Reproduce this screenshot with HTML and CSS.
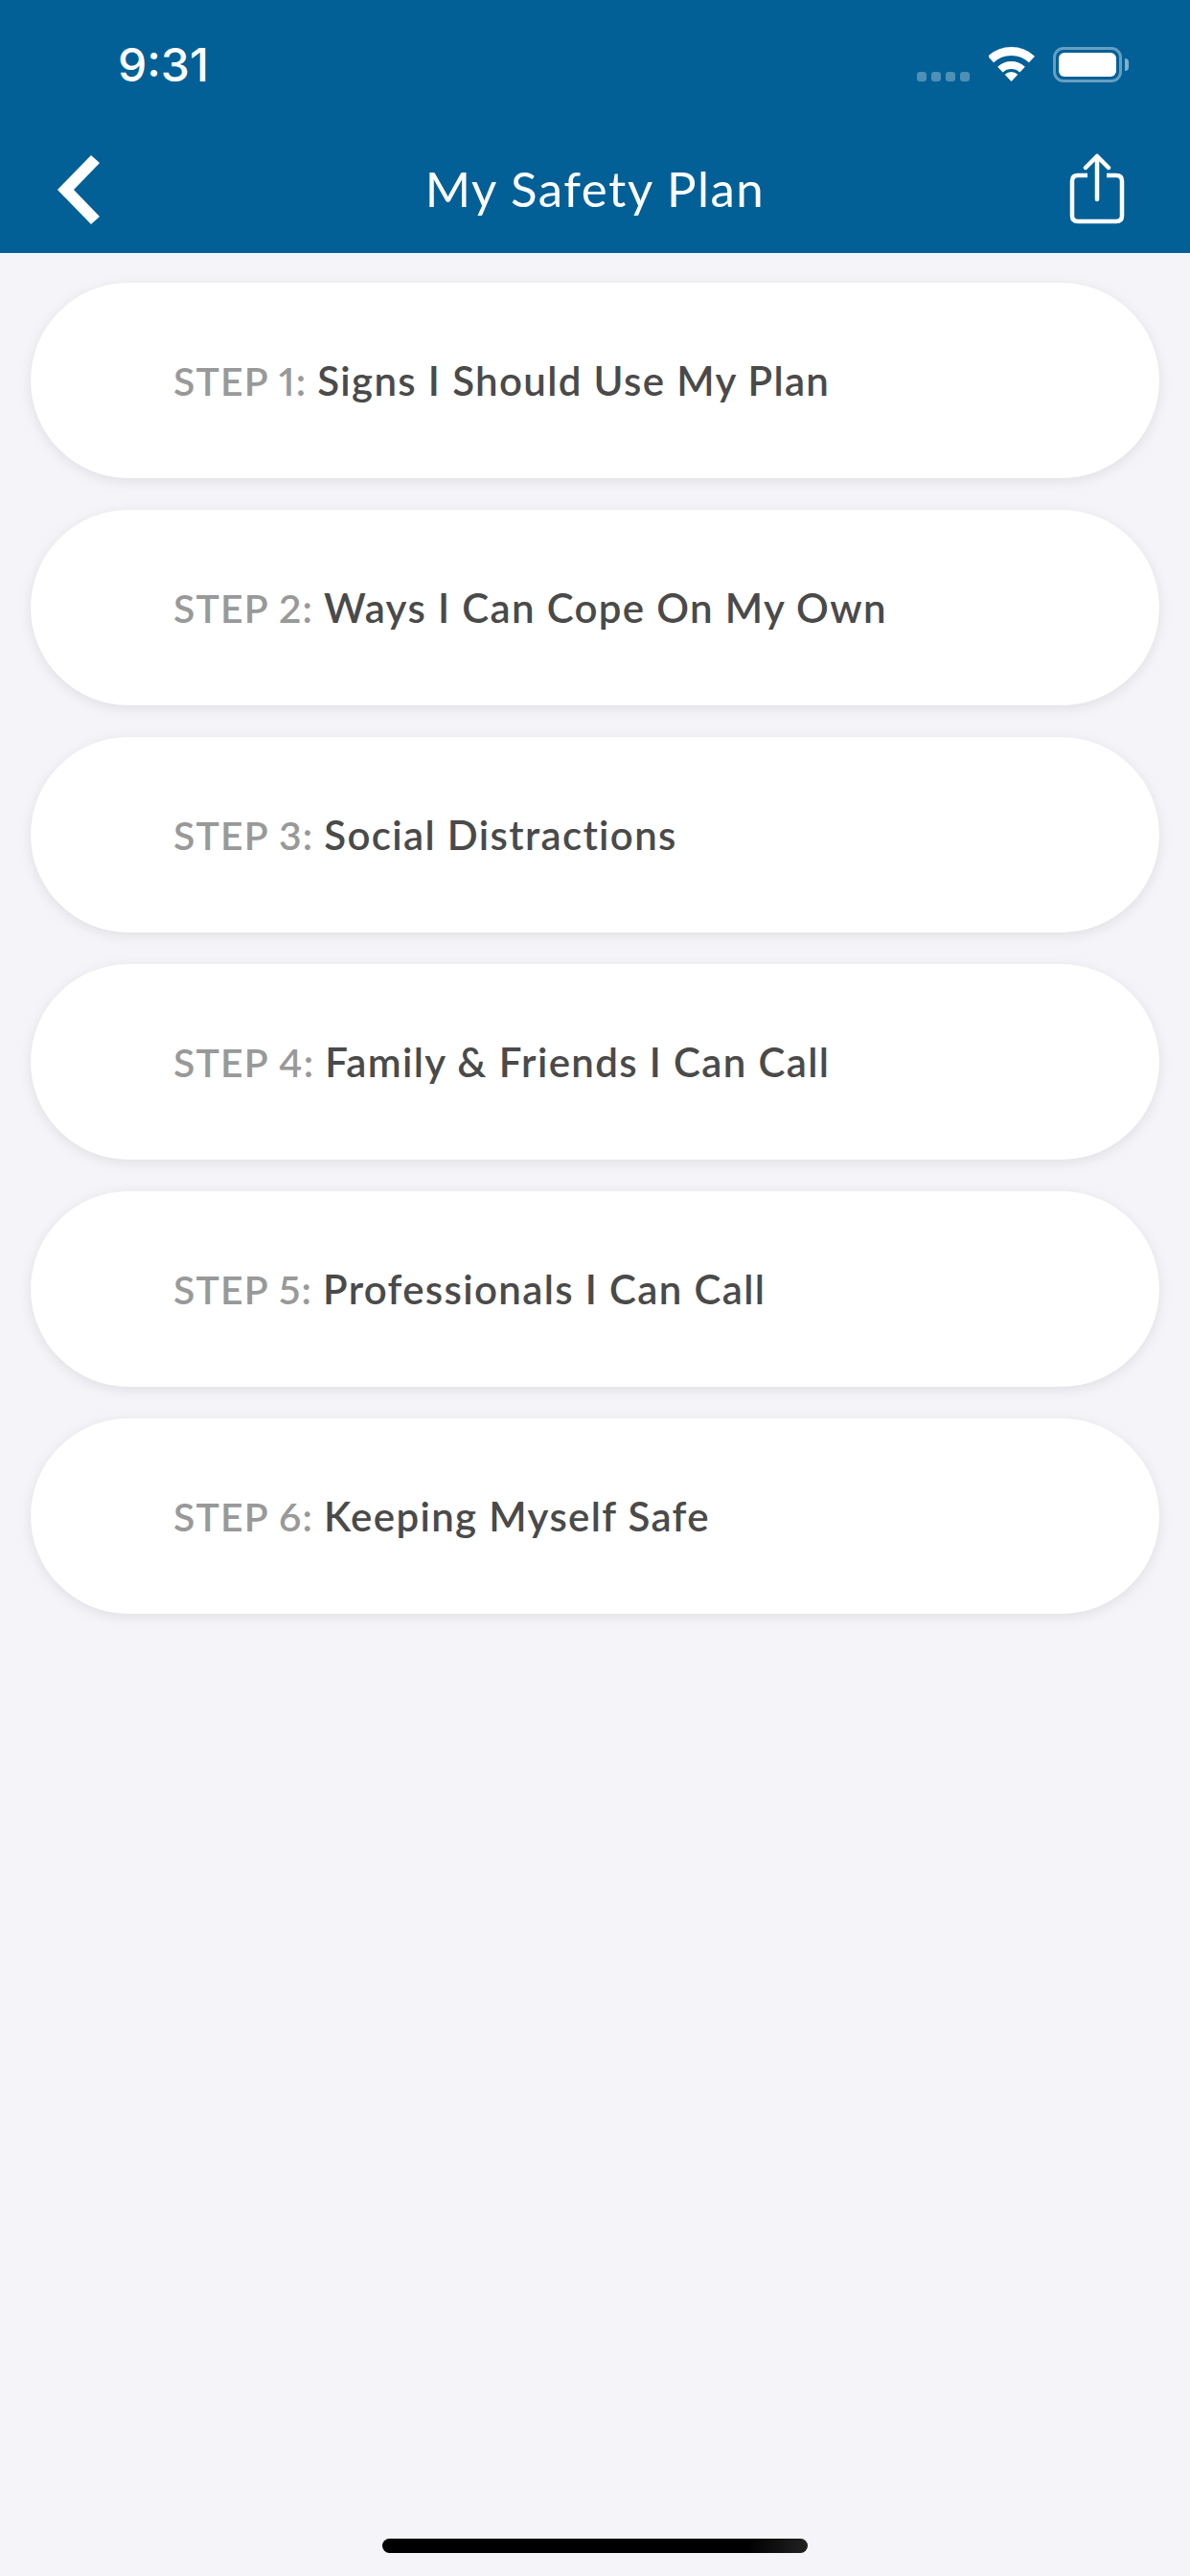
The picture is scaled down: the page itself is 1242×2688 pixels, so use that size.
FILE: index.html
```html
<!DOCTYPE html>
<html lang="en">
<head>
    <meta charset="UTF-8">
    <meta name="viewport" content="width=device-width, initial-scale=1.0">
    <title>My Safety Plan</title>
    <link rel="stylesheet" href="styles.css">
</head>
<body>
    <div class="header">
        <div class="status-bar">
            <span class="time">9:31</span>
            <div class="status-icons">
                <div class="signal">
                    <span class="dot"></span>
                    <span class="dot"></span>
                    <span class="dot"></span>
                    <span class="dot"></span>
                </div>
                <svg class="wifi" width="48" height="36" viewBox="0 0 48 36">
                    <path d="M2 13A31.5 31.5 0 0 1 45 13" fill="none" stroke="#fff" stroke-width="9"/>
                    <path d="M11.9 23.6A17 17 0 0 1 35.1 23.6" fill="none" stroke="#fff" stroke-width="8"/>
                    <path d="M23.5 36L16.7 28.7A10 10 0 0 1 30.3 28.7Z" fill="#fff"/>
                </svg>
                <div class="battery">
                    <div class="battery-body"><div class="battery-level"></div></div>
                    <div class="battery-nub"></div>
                </div>
            </div>
        </div>
        <div class="nav-bar">
            <svg class="back" width="44" height="72" viewBox="0 0 44 72">
                <path d="M35 0L44 8L17 36L44 64L35 72L0 36Z" fill="#fff"/>
            </svg>
            <h1 class="title">My Safety Plan</h1>
            <svg class="share" width="60" height="76" viewBox="0 0 60 76">
                <path d="M20 23H10Q4 23 4 29V65Q4 71 10 71H50Q56 71 56 65V29Q56 23 50 23H40" fill="none" stroke="#fff" stroke-width="4.5"/>
                <path d="M30 48V3M18 15L30 3L42 15" fill="none" stroke="#fff" stroke-width="4.5" stroke-linecap="round" stroke-linejoin="round"/>
            </svg>
        </div>
    </div>

    <div class="step-list">
        <div class="step"><span class="step-num">STEP 1:</span> <span class="step-name">Signs I Should Use My Plan</span></div>
        <div class="step"><span class="step-num">STEP 2:</span> <span class="step-name">Ways I Can Cope On My Own</span></div>
        <div class="step"><span class="step-num">STEP 3:</span> <span class="step-name">Social Distractions</span></div>
        <div class="step"><span class="step-num">STEP 4:</span> <span class="step-name">Family &amp; Friends I Can Call</span></div>
        <div class="step"><span class="step-num">STEP 5:</span> <span class="step-name">Professionals I Can Call</span></div>
        <div class="step"><span class="step-num">STEP 6:</span> <span class="step-name">Keeping Myself Safe</span></div>
    </div>

    <div class="home-indicator"></div>
</body>
</html>
```

FILE: styles.css
```css
* {
    margin: 0;
    padding: 0;
    box-sizing: border-box;
}

html, body {
    height: 100%;
}

body {
    display: flex;
    flex-direction: column;
    font-family: 'Lato', 'Liberation Sans', sans-serif;
    background: #f4f4f9;
    overflow: hidden;
}

.header {
    height: 264px;
    background: #026097;
    color: #fff;
    flex-shrink: 0;
}

.status-bar {
    display: flex;
    justify-content: space-between;
    height: 132px;
    padding: 50px 64px 0 123px;
}

.time {
    font-family: 'Inter', 'Liberation Sans', sans-serif;
    font-size: 48px;
    font-weight: 500;
    line-height: 36px;
}

.status-icons {
    display: flex;
    align-items: flex-start;
    margin-top: -1px;
}

.signal {
    display: flex;
    gap: 5px;
    margin: 26px 20px 0 0;
}

.dot {
    width: 10px;
    height: 10px;
    border-radius: 3px;
    background: rgba(255, 255, 255, 0.3);
}

.wifi {
    margin-right: 19px;
}

.battery {
    display: flex;
    align-items: center;
}

.battery-body {
    width: 72px;
    height: 37px;
    padding: 3px;
    border: 3px solid rgba(255, 255, 255, 0.4);
    border-radius: 11px;
}

.battery-level {
    height: 100%;
    background: #fff;
    border-radius: 6px;
}

.battery-nub {
    width: 4px;
    height: 13px;
    margin-left: 3px;
    background: rgba(255, 255, 255, 0.5);
    border-radius: 0 4px 4px 0;
}

.nav-bar {
    display: grid;
    grid-template-columns: 1fr auto 1fr;
    align-items: center;
    height: 132px;
    padding: 0 67px 0 60px;
}

.title {
    margin: -3px 0 0 7px;
    font-size: 51px;
    font-weight: 400;
    letter-spacing: 1.5px;
}

.share {
    justify-self: end;
}

.step-list {
    flex: 1;
    display: flex;
    flex-direction: column;
    gap: 33px;
    padding: 31px 32px 0;
}

.step {
    display: flex;
    align-items: center;
    gap: 11px;
    height: 204px;
    padding-left: 149px;
    background: #fff;
    border-radius: 102px;
    font-size: 41px;
    font-weight: 600;
    font-variant-numeric: proportional-nums;
    box-shadow: 0 3px 14px rgba(0, 0, 0, 0.09);
}

.step-num {
    color: #999;
    letter-spacing: 1.1px;
}

.step-name {
    color: #4a4a4a;
    font-size: 42px;
    letter-spacing: 1.35px;
}

.home-indicator {
    flex-shrink: 0;
    width: 444px;
    height: 15px;
    margin: 0 auto 24px;
    border-radius: 8px;
    background: linear-gradient(to right, #000 86%, #222);
}
```
